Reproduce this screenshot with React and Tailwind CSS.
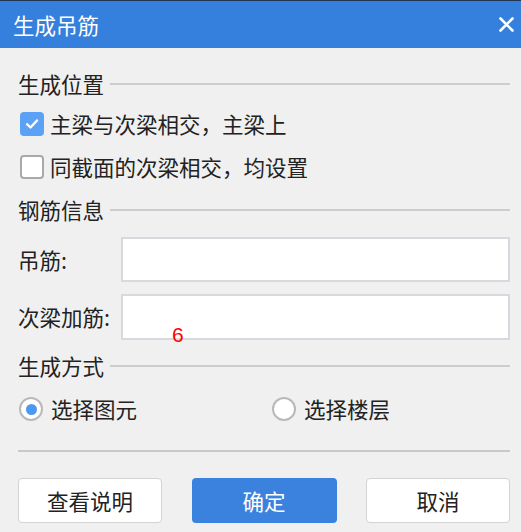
import React from "react";

function SectionHeader({ title }) {
  return (
    <div className="flex h-[24px] items-center">
      <span className="leading-none">{title}</span>
      <div className="ml-[6px] h-[2px] flex-1 bg-[#cdcdcd]" />
    </div>
  );
}

function Checkbox({ checked, label }) {
  return (
    <div className="flex h-[30px] items-center">
      <div
        className={
          checked
            ? "ml-[2px] flex h-[24px] w-[24px] items-center justify-center rounded-[4px] bg-[#5ba2f6]"
            : "ml-[2px] h-[24px] w-[24px] rounded-[4px] border-2 border-[#a9a9a9] bg-white"
        }
      >
        {checked && (
          <svg width="16" height="16" viewBox="0 0 16 16">
            <path d="M3 8.2 L6.5 11.5 L13 4.5" fill="none" stroke="white" strokeWidth="2.4" strokeLinecap="round" strokeLinejoin="round" />
          </svg>
        )}
      </div>
      <span className="ml-[6px] leading-none">{label}</span>
    </div>
  );
}

function Radio({ checked, label }) {
  return (
    <div className="flex items-center">
      <div className="ml-[1px] flex h-[24px] w-[24px] items-center justify-center rounded-full border-2 border-[#b9b9b9] bg-white">
        {checked && <div className="h-[11px] w-[11px] rounded-full bg-[#4d98f3]" />}
      </div>
      <span className="ml-[8px] leading-none">{label}</span>
    </div>
  );
}

function InputRow({ label }) {
  return (
    <div className="flex h-full items-center">
      <span className="w-[103px] leading-none">{label}</span>
      <div className="flex-1 self-stretch border-2 border-[#d6dadf] bg-white" />
    </div>
  );
}

export default function App() {
  return (
    <div className="relative h-[532px] w-[521px] overflow-hidden bg-[#f0f0f0] font-['Noto_Sans_CJK_SC','Microsoft_YaHei',sans-serif] text-[21.5px] text-[#222222]">
      <div className="h-[1px] bg-[#233352]" />
      <div className="flex h-[47px] items-center justify-between bg-[#3580dc] pl-[13px] pr-[7px]">
        <span className="leading-none text-white">生成吊筋</span>
        <svg width="15" height="15" viewBox="0 0 15 15">
          <path d="M1.5 1.5 L13.5 13.5 M13.5 1.5 L1.5 13.5" stroke="white" strokeWidth="2.6" strokeLinecap="round" />
        </svg>
      </div>

      <div className="flex flex-col pl-[18px] pr-[11px]">
        <div className="mt-[24px]">
          <SectionHeader title="生成位置" />
        </div>
        <div className="mt-[13px]">
          <Checkbox checked label="主梁与次梁相交，主梁上" />
        </div>
        <div className="mt-[13px]">
          <Checkbox label="同截面的次梁相交，均设置" />
        </div>
        <div className="mt-[16px]">
          <SectionHeader title="钢筋信息" />
        </div>
        <div className="mt-[15px] h-[45px]">
          <InputRow label="吊筋:" />
        </div>
        <div className="mt-[12px] h-[46px]">
          <InputRow label="次梁加筋:" />
        </div>
        <div className="mt-[14px]">
          <SectionHeader title="生成方式" />
        </div>
        <div className="mt-[16px] flex h-[30px] items-center">
          <div className="w-[253px]">
            <Radio checked label="选择图元" />
          </div>
          <Radio label="选择楼层" />
        </div>
        <div className="mt-[26px] h-[2px] bg-[#c9c9c9]" />
        <div className="mt-[26px] flex h-[45px] justify-between">
          <button className="w-[144px] rounded-[4px] border border-[#d3d3d3] bg-white leading-none text-[#222222]">
            查看说明
          </button>
          <button className="w-[145px] rounded-[4px] bg-[#3a82de] leading-none text-white">
            确定
          </button>
          <button className="w-[144px] rounded-[4px] border border-[#d3d3d3] bg-white leading-none text-[#222222]">
            取消
          </button>
        </div>
      </div>

      <div className="absolute left-[172px] top-[324px] font-['Liberation_Sans',sans-serif] text-[21px] leading-none text-[#ff0000]">
        6
      </div>
    </div>
  );
}
